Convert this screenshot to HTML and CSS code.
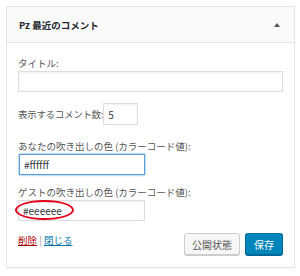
FILE: index.html
```html
<!DOCTYPE html>
<html lang="ja">
<head>
    <meta charset="UTF-8">
    <title>Pz 最近のコメント</title>
    <link rel="stylesheet" href="styles.css">
</head>
<body>
    <div class="widget">
        <div class="widget-top">
            <h3 class="widget-title">Pz 最近のコメント</h3>
            <span class="toggle"></span>
        </div>
        <form class="widget-inside">
            <div class="field">
                <label>タイトル:</label>
                <input type="text" class="wide" value="">
            </div>
            <div class="field inline">
                <label>表示するコメント数:</label>
                <input type="text" class="num" value="5">
            </div>
            <div class="field">
                <label>あなたの吹き出しの色 (カラーコード値):</label>
                <input type="text" class="color focus" value="#ffffff">
            </div>
            <div class="field mark-wrap">
                <label>ゲストの吹き出しの色 (カラーコード値):</label>
                <input type="text" class="color" value="#eeeeee">
                <span class="mark"></span>
            </div>
            <div class="actions">
                <div class="links">
                    <a class="del">削除</a> <span class="sep">|</span> <a class="close">閉じる</a>
                </div>
                <div class="buttons">
                    <input type="button" class="btn" value="公開状態">
                    <input type="button" class="btn primary" value="保存">
                </div>
            </div>
        </form>
    </div>
</body>
</html>
```

FILE: styles.css
```css
body {
    margin: 0;
    padding: 6px 5px 7px 6px;
    background-color: #fff;
    font-family: "Noto Sans CJK JP", "Noto Sans", sans-serif;
    font-size: 9.5px;
    color: #444;
}

.widget {
    border: 1px solid #e5e5e5;
    box-shadow: 0 1px 1px rgba(0, 0, 0, 0.04);
    background-color: #fff;
}

.widget-top {
    height: 35px;
    display: flex;
    align-items: center;
    justify-content: space-between;
    padding: 0 12px 0 12px;
    background-color: #fafafa;
    border-bottom: 1px solid #e5e5e5;
}

.widget-title {
    margin: 0;
    font-size: 9.5px;
    font-weight: bold;
    color: #23282d;
}

.toggle {
    width: 0;
    height: 0;
    border-left: 3px solid transparent;
    border-right: 3px solid transparent;
    border-bottom: 4px solid #50575e;
    margin-right: 2px;
}

.widget-inside {
    padding: 14px 11px 12px 11px;
    display: flex;
    flex-direction: column;
}

.field {
    display: flex;
    flex-direction: column;
    align-items: flex-start;
    gap: 2px;
    margin-bottom: 11px;
}

.field label {
    line-height: 12px;
    color: #555;
}

.field.inline {
    flex-direction: row;
    align-items: center;
    gap: 0;
    margin-bottom: 15px;
}

.field.inline label {
    letter-spacing: -0.3px;
}

input[type="text"] {
    box-sizing: border-box;
    margin: 0;
    height: 21px;
    padding: 0 4px;
    border: 1px solid #ddd;
    box-shadow: inset 0 1px 2px rgba(0, 0, 0, 0.07);
    font-family: "Noto Sans CJK JP", "Noto Sans", sans-serif;
    font-size: 10px;
    color: #32373c;
    background-color: #fff;
}

.wide {
    width: 100%;
}

.num {
    width: 35px;
    height: 22px !important;
}

.color {
    width: 127px;
}

.color.focus {
    border-color: #5b9dd9;
    box-shadow: 0 0 2px rgba(30, 140, 190, 0.8);
    margin-left: 1px !important;
    width: 126px;
}

.mark-wrap {
    position: relative;
    margin-bottom: 12px;
}

.mark {
    position: absolute;
    left: -3px;
    top: 14px;
    width: 55px;
    height: 16px;
    border: 2.5px solid #e4001b;
    border-radius: 50%;
}

.actions {
    display: flex;
    justify-content: space-between;
    align-items: center;
}

.links {
    margin-top: -8px;
}

.links a {
    text-decoration: underline;
}

.del {
    color: #a00;
}

.sep {
    color: #999;
}

.close {
    color: #0073aa;
}

.buttons {
    display: flex;
    gap: 5px;
}

.btn {
    margin: 0;
    height: 22px;
    padding: 0 7px;
    border: 1px solid #ccc;
    border-radius: 3px;
    background-color: #f7f7f7;
    box-shadow: 0 1px 0 #ccc;
    font-family: "Noto Sans CJK JP", "Noto Sans", sans-serif;
    font-size: 10px;
    color: #555;
}

.btn.primary {
    background-color: #0085ba;
    border-color: #0073aa #006799 #006799;
    box-shadow: 0 1px 0 #006799;
    color: #fff;
    padding: 0 8px;
}
```
